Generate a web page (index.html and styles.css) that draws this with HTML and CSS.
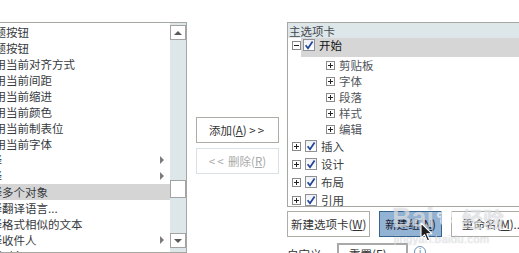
FILE: index.html
```html
<!DOCTYPE html>
<html lang="zh-CN">
<head>
    <meta charset="UTF-8">
    <title>自定义功能区</title>
    <link rel="stylesheet" href="styles.css">
</head>
<body>
    <div class="page">
        <!-- commands list (left) -->
        <div class="source">
            <ul class="cmd-list">
                <li><span>标题按钮</span></li>
                <li><span>标题按钮</span></li>
                <li><span>使用当前对齐方式</span></li>
                <li><span>使用当前间距</span></li>
                <li><span>使用当前缩进</span></li>
                <li><span>使用当前颜色</span></li>
                <li><span>使用当前制表位</span></li>
                <li><span>使用当前字体</span></li>
                <li class="pick"><span>选择</span><i class="sub"></i></li>
                <li class="pick"><span>选择</span><i class="sub"></i></li>
                <li class="pick selected"><span>选择多个对象</span></li>
                <li class="pick"><span>选择翻译语言...</span></li>
                <li class="pick"><span>选择格式相似的文本</span></li>
                <li class="pick"><span>选择收件人</span><i class="sub"></i></li>
                <li class="pick"><span>选择对象</span></li>
            </ul>
            <div class="vscroll">
                <span class="sb-btn up"></span>
                <span class="sb-thumb"></span>
                <span class="sb-btn down"></span>
            </div>
        </div>

        <!-- add / remove -->
        <div class="mover">
            <button class="btn">添加(<u>A</u>) <span class="arrows">&gt;&gt;</span></button>
            <button class="btn" disabled><span class="arrows">&lt;&lt;</span> 删除(<u>R</u>)</button>
        </div>

        <!-- ribbon tabs tree (right) -->
        <div class="ribbon">
            <div class="tree">
                <div class="tree-head">主选项卡</div>
                <div class="node top open">
                    <span class="tog"></span>
                    <span class="label"><span class="chk"><svg width="10" height="10" viewBox="0 0 10 10"><path d="M1.6 5.2 L4 8.2 L8.6 1.4" fill="none" stroke="#22449c" stroke-width="1.7"/></svg></span>开始</span>
                </div>
                <div class="node child"><span class="tog plus"></span><span class="label">剪贴板</span></div>
                <div class="node child"><span class="tog plus"></span><span class="label">字体</span></div>
                <div class="node child"><span class="tog plus"></span><span class="label">段落</span></div>
                <div class="node child"><span class="tog plus"></span><span class="label">样式</span></div>
                <div class="node child"><span class="tog plus"></span><span class="label">编辑</span></div>
                <div class="node top">
                    <span class="tog plus"></span>
                    <span class="label"><span class="chk"><svg width="10" height="10" viewBox="0 0 10 10"><path d="M1.6 5.2 L4 8.2 L8.6 1.4" fill="none" stroke="#22449c" stroke-width="1.7"/></svg></span>插入</span>
                </div>
                <div class="node top">
                    <span class="tog plus"></span>
                    <span class="label"><span class="chk"><svg width="10" height="10" viewBox="0 0 10 10"><path d="M1.6 5.2 L4 8.2 L8.6 1.4" fill="none" stroke="#22449c" stroke-width="1.7"/></svg></span>设计</span>
                </div>
                <div class="node top">
                    <span class="tog plus"></span>
                    <span class="label"><span class="chk"><svg width="10" height="10" viewBox="0 0 10 10"><path d="M1.6 5.2 L4 8.2 L8.6 1.4" fill="none" stroke="#22449c" stroke-width="1.7"/></svg></span>布局</span>
                </div>
                <div class="node top">
                    <span class="tog plus"></span>
                    <span class="label"><span class="chk"><svg width="10" height="10" viewBox="0 0 10 10"><path d="M1.6 5.2 L4 8.2 L8.6 1.4" fill="none" stroke="#22449c" stroke-width="1.7"/></svg></span>引用</span>
                </div>
            </div>

            <div class="tree-actions">
                <button class="btn new-tab">新建选项卡(<u>W</u>)</button>
                <button class="btn new-group active">新建组(<u>N</u>)</button>
                <button class="btn rename">重命名(<u>M</u>)...</button>
            </div>

            <div class="reset-row">
                <span class="reset-label">自定义:</span>
                <span class="select">重置(<u>E</u>) <span class="caret">▾</span></span>
                <span class="info">i</span>
            </div>
        </div>

        <!-- watermark + mouse pointer lie over the buttons -->
        <div class="watermark">
            <div class="wm-top">Bai<svg width="20" height="20" viewBox="0 0 20 20"><g fill="none" stroke="currentColor" stroke-width="2"><ellipse cx="10" cy="13" rx="5" ry="4.5"/><circle cx="4" cy="7" r="2"/><circle cx="8" cy="3.5" r="2"/><circle cx="13" cy="3.5" r="2"/><circle cx="17" cy="7" r="2"/></g></svg><span class="wm-cn">经验</span></div>
            <div class="wm-url">jingyan.baidu.com</div>
        </div>
        <svg class="pointer" width="14" height="21" viewBox="0 0 14 21"><path d="M1 1 L1 16 L4.6 12.6 L7.4 19 L9.6 18 L6.9 11.7 L11.8 11.7 Z" fill="#1e1e1e" stroke="#fff" stroke-width="1.1" stroke-linejoin="round"/></svg>
    </div>
</body>
</html>
```

FILE: styles.css
```css
body {
    margin: 0;
    background: #fff;
    font-family: "Noto Sans CJK SC", "Noto Sans", sans-serif;
    font-size: 11.5px;
    color: #333;
    overflow: hidden;
}
.page {
    position: relative;
    display: flex;
    width: 519px;
    height: 253px;
    padding-top: 22px;
    box-sizing: border-box;
    overflow: hidden;
}

/* left list */
.source {
    flex: none;
    display: flex;
    width: 202px;
    height: 231px;
    margin-left: -15px;
    border: 1px solid #a7a7a2;
    box-sizing: border-box;
}
.cmd-list {
    flex: 1;
    min-width: 0;
    margin: 0;
    padding: 1px 0 0;
    list-style: none;
    overflow: hidden;
}
.cmd-list li {
    display: flex;
    align-items: center;
    height: 16px;
    line-height: 16px;
    color: #363a40;
    white-space: nowrap;
}
.cmd-list li span { margin-left: -3px; }
.cmd-list li.pick span { margin-left: -7px; }
.cmd-list li.selected { background: #d5d5d5; }
.sub {
    margin-left: auto;
    margin-right: 6px;
    border-left: 4px solid #7c7c7c;
    border-top: 4px solid transparent;
    border-bottom: 4px solid transparent;
}
.vscroll {
    flex: none;
    display: flex;
    flex-direction: column;
    width: 16px;
    padding: 2px 0 4px;
    box-sizing: border-box;
    background: #dde6e9;
}
.sb-btn {
    display: flex;
    flex: none;
    align-items: center;
    justify-content: center;
    height: 15px;
    border: 1px solid #a3a3a3;
    box-sizing: border-box;
    background: #fff;
}
.sb-btn::before {
    content: "";
    border-left: 4px solid transparent;
    border-right: 4px solid transparent;
}
.sb-btn.up::before { border-bottom: 4px solid #5a5a5a; }
.sb-btn.down::before { border-top: 4px solid #5a5a5a; }
.sb-btn.down { margin-top: auto; }
.sb-thumb {
    flex: none;
    height: 18px;
    margin-top: 140px;
    border: 1px solid #a3a3a3;
    box-sizing: border-box;
    background: #fff;
}

/* buttons */
.btn {
    font: inherit;
    height: 26px;
    padding: 0;
    border: 1px solid #adada7;
    background: #fff;
    color: #333;
    white-space: nowrap;
    line-height: 22px;
}
.btn:disabled {
    border-color: #d9e1e4;
    color: #a9a9a9;
}
.arrows { letter-spacing: 2px; }
.mover {
    flex: none;
    display: flex;
    flex-direction: column;
    align-items: flex-start;
    gap: 5px;
    width: 100px;
    padding: 95px 0 0 9px;
    box-sizing: border-box;
}
.mover .btn { width: 83px; }

/* right tree */
.ribbon {
    flex: none;
    display: flex;
    flex-direction: column;
    width: 240px;
}
.tree {
    flex: none;
    height: 185px;
    border: 1px solid #a7a7a2;
    border-right: none;
    box-sizing: border-box;
    overflow: hidden;
}
.tree-head {
    height: 15px;
    line-height: 16px;
    padding-left: 1px;
    background: #dde6e9;
    color: #45484d;
}
.node {
    display: flex;
    height: 18px;
    color: #3c3f44;
}
.node.top { padding-left: 4px; }
.node.child {
    height: 16px;
    padding-left: 38px;
    color: #51555b;
}
.node .tog { align-self: center; }
.label {
    flex: 1;
    display: flex;
    align-items: center;
    gap: 4px;
    line-height: 14px;
    white-space: nowrap;
}
.node.top .label { padding-left: 4px; }
.node.open { height: 19px; color: #111; }
.node.open .tog { align-self: flex-start; margin-top: 3px; }
.node.open .label {
    padding-left: 2px;
    padding-bottom: 5px;
    background: #d6d6d6;
}
.node.child .label { margin-left: 4px; }
.tog {
    display: grid;
    place-items: center;
    width: 9px;
    height: 9px;
    border: 1px solid #8a8a8a;
    box-sizing: border-box;
    background: #fff;
}
.tog::before,
.tog::after {
    content: "";
    grid-area: 1 / 1;
    background: #222;
}
.tog::before { width: 5px; height: 1px; }
.tog.plus::after { width: 1px; height: 5px; }
.chk {
    display: flex;
    align-items: center;
    justify-content: center;
    width: 12px;
    height: 12px;
    border: 1px solid #8e9096;
    box-sizing: border-box;
    background: linear-gradient(#eef0f4, #fff);
}

.tree-actions {
    flex: none;
    display: flex;
    gap: 9px;
    margin-top: 4px;
}
.new-tab { width: 101px; }
.new-group {
    width: 76px;
    border-color: #36648f;
    background: #93b3d4;
    color: #223;
}
.rename { width: 90px; padding-left: 10px; text-align: left; }

.reset-row {
    flex: none;
    display: flex;
    align-items: flex-start;
    height: 24px;
    margin-top: 6px;
    line-height: 16px;
    color: #333;
}
.reset-label { width: 50px; padding-top: 3px; }
.select {
    width: 71px;
    height: 24px;
    padding: 1px 0 0 10px;
    border: 2px solid #a9a9a9;
    box-sizing: border-box;
}
.caret { margin-left: 4px; }
.info {
    width: 10px;
    height: 10px;
    margin: 3px 0 0 6px;
    border: 1px solid #6d8fb8;
    border-radius: 50%;
    font-size: 8px;
    line-height: 10px;
    text-align: center;
    color: #4b6f9c;
}

/* overlays */
.watermark {
    position: absolute;
    left: 392px;
    top: 203px;
    color: rgba(255, 255, 255, 0.6);
    text-shadow: 0 0 1px rgba(60, 70, 90, 0.35);
    font-family: "Liberation Sans", sans-serif;
    pointer-events: none;
}
.wm-top {
    display: flex;
    align-items: center;
    gap: 2px;
    font-size: 27px;
    font-weight: bold;
    line-height: 30px;
}
.wm-top svg { color: rgba(255, 255, 255, 0.6); }
.wm-cn {
    margin-left: 4px;
    font-family: "Noto Sans CJK SC", sans-serif;
    font-size: 21px;
}
.wm-url {
    font-size: 11px;
    line-height: 12px;
    letter-spacing: 0.4px;
    padding-left: 2px;
}
.pointer {
    position: absolute;
    left: 420px;
    top: 222px;
}
```
